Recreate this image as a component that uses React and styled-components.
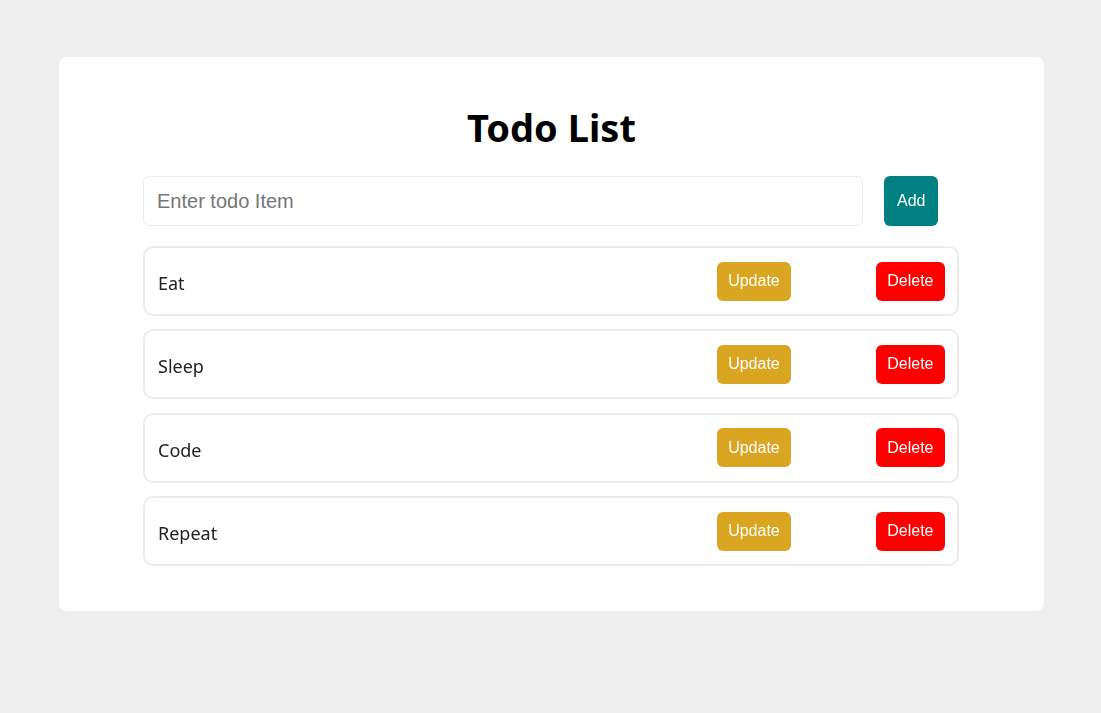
import React, { useState } from 'react';
import styled, { createGlobalStyle } from 'styled-components';

const GlobalStyle = createGlobalStyle`
    html, body {
        margin: 0;
        padding: 0;
        background: #eeeeee;
        font-family: "Noto Sans", "Open Sans", sans-serif;
    }
`;

const Page = styled.div`
    min-height: 100vh;
    padding: 57px 0 0 2px;
    box-sizing: border-box;
`;

const Card = styled.div`
    width: 985px;
    margin: 0 auto;
    background: white;
    border-radius: 8px;
    padding: 38px 0 45px;
    box-sizing: border-box;
`;

const Title = styled.h1`
    margin: 0 0 17px;
    text-align: center;
    font-size: 38px;
    font-weight: bold;
    line-height: 64px;
    color: black;
`;

const Column = styled.div`
    width: 816px;
    margin-left: 84px;
`;

const Form = styled.form`
    display: flex;
    align-items: stretch;
    margin-bottom: 20px;
`;

const Input = styled.input`
    width: 720px;
    height: 50px;
    box-sizing: border-box;
    border: 1px solid #ebebeb;
    border-radius: 6px;
    padding: 0 13px;
    font-family: "Liberation Sans", Arial, sans-serif;
    font-size: 20px;
    outline: none;
    &::placeholder {
        color: #757575;
    }
`;

const Button = styled.button`
    border: none;
    border-radius: 6px;
    background: ${props => props.bg};
    color: white;
    font-family: "Liberation Sans", Arial, sans-serif;
    font-size: 16px;
    height: ${props => props.h || '39px'};
    padding: 0 ${props => props.px || '11px'};
    margin-left: ${props => props.ml || '0'};
    cursor: pointer;
`;

const List = styled.ul`
    list-style: none;
    margin: 0;
    padding: 0;
    display: flex;
    flex-direction: column;
    gap: 13.4px;
`;

const Item = styled.li`
    display: flex;
    align-items: center;
    height: 70px;
    box-sizing: border-box;
    border: 2px solid #ececec;
    border-radius: 10px;
    padding: 0 12px 0 13px;
`;

const ItemText = styled.span`
    flex: 1;
    font-size: 18px;
    color: #222;
    padding-top: 4px;
`;

export default function App() {
    const [todos] = useState(['Eat', 'Sleep', 'Code', 'Repeat']);
    return (
        <Page>
            <GlobalStyle />
            <Card>
                <Title>Todo List</Title>
                <Column>
                    <Form onSubmit={e => e.preventDefault()}>
                        <Input placeholder="Enter todo Item" autoFocus />
                        <Button bg="#008080" h="50px" px="13px" ml="21px">Add</Button>
                    </Form>
                    <List>
                        {todos.map(t => (
                            <Item key={t}>
                                <ItemText>{t}</ItemText>
                                <Button bg="#daa520">Update</Button>
                                <Button bg="#ff0000" ml="85px" px="11.5px">Delete</Button>
                            </Item>
                        ))}
                    </List>
                </Column>
            </Card>
        </Page>
    );
}
